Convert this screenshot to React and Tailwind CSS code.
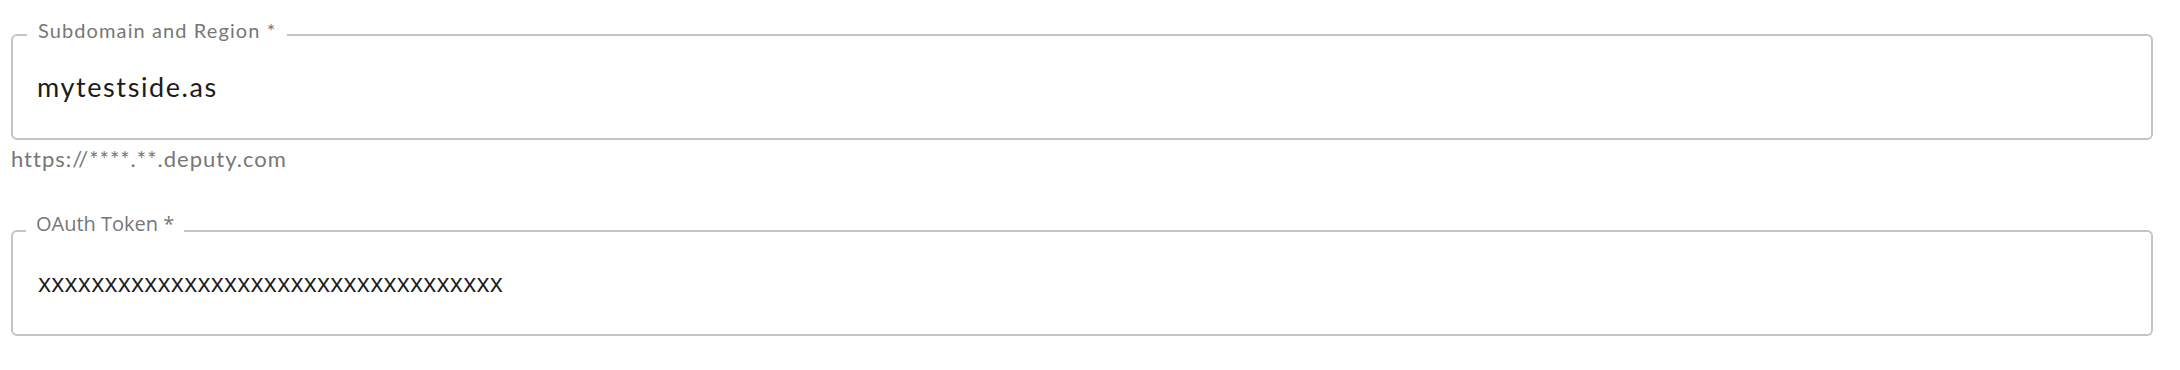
export default function App() {
  const token = "x".repeat(35);

  return (
    <div className="min-h-screen bg-white pl-[11px] pr-[27px] pt-[34px]">
      {/* Subdomain and Region */}
      <div className="relative h-[106px] rounded-[6px] border-2 border-[#c4c4c4] pl-[24px] pt-[37px]">
        <label className="absolute left-[14px] top-[-16px] bg-white px-[11px] font-['Lato',sans-serif] text-[20px] leading-[20px] tracking-[1.1px] text-[#777777]">
          Subdomain and Region *
        </label>
        <div className="font-['Lato',sans-serif] text-[27px] leading-[27px] tracking-[1.6px] text-[#1c1c1c]">
          mytestside.as
        </div>
      </div>
      <p className="mt-[8px] font-['Lato',sans-serif] text-[22px] leading-[22px] tracking-[1px] text-[#777777]">
        https://****.**.deputy.com
      </p>

      {/* OAuth Token */}
      <div className="relative mt-[60px] h-[106px] rounded-[6px] border-2 border-[#c4c4c4] pl-[25px] pt-[38px]">
        <label className="absolute left-[13px] top-[-18px] bg-white px-[10px] font-['Open_Sans',sans-serif] text-[20px] leading-[20px] text-[#777777]">
          OAuth Token *
        </label>
        <div className="font-['Open_Sans',sans-serif] text-[25px] leading-[25px] tracking-[0.2px] text-[#1c1c1c]">
          {token}
        </div>
      </div>
    </div>
  );
}
